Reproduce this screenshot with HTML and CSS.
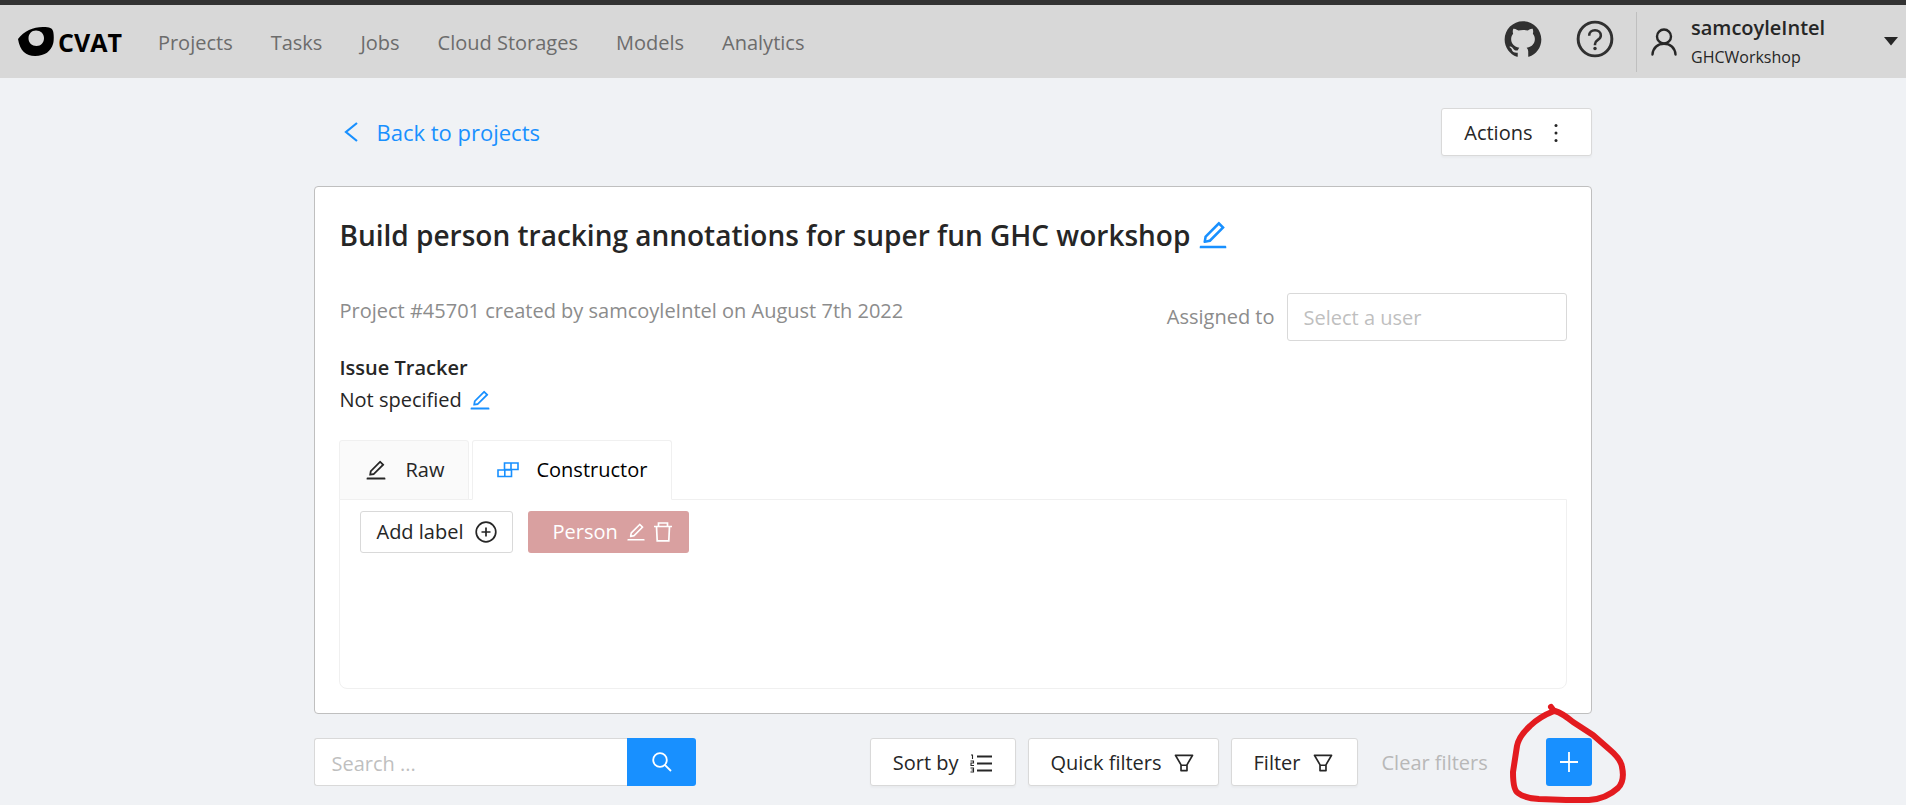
FILE: index.html
```html
<!DOCTYPE html>
<html lang="en">
<head>
<meta charset="utf-8">
<title>CVAT project</title>
<link rel="stylesheet" href="styles.css">
</head>
<body>
<svg class="sprite" aria-hidden="true">
  <symbol id="edit" viewBox="0 0 1024 1024"><path fill="currentColor" d="M257.700 752c2 0 4-.2 6-.5L431.900 722c2-.4 3.900-1.300 5.300-2.800l423.900-423.900a9.960 9.960 0 000-14.100L694.900 114.900c-1.900-1.900-4.400-2.900-7.100-2.900s-5.200 1-7.100 2.900L256.800 538.800c-1.500 1.500-2.400 3.300-2.800 5.300l-29.500 168.200a33.500 33.500 0 009.400 29.800c6.600 6.400 14.900 9.900 23.800 9.900zm67.400-174.400L687.800 215l73.300 73.300-362.700 362.600-88.900 15.700 15.600-89zM880 836H144c-17.700 0-32 14.300-32 32v36c0 4.400 3.600 8 8 8h784c4.400 0 8-3.600 8-8v-36c0-17.700-14.300-32-32-32z"/></symbol>
  <symbol id="filter" viewBox="0 0 1024 1024"><path fill="currentColor" d="M880.100 154H143.900c-24.500 0-39.800 26.700-27.500 48L349 597.400V838c0 17.700 14.200 32 31.800 32h262.400c17.600 0 31.800-14.300 31.800-32V597.400L907.700 202c12.200-21.300-3.100-48-27.600-48zM603.400 798H420.600V642h182.900v156zm9.600-236.600l-9.500 16.600h-183l-9.500-16.600L212.700 226h598.600L613 561.400z"/></symbol>
</svg>
<header class="header">
  <a class="logo" href="#" aria-label="CVAT">
    <svg width="36" height="30" viewBox="0 0 36 30" aria-hidden="true"><path fill-rule="evenodd" d="M0 12C6 4 15 0 25 0C32 0 34 1 35 4C36 7 36 14 35 17C33 24 27 29 17 29C8 29 2 24 0 12ZM18 3.500C13.500 3.500 10.500 7 10.500 11.500S14 19 18.500 19S26 15.500 26 11S22.500 3.500 18 3.500Z"/></svg>
    <span>CVAT</span>
  </a>
  <nav class="nav">
    <a href="#">Projects</a><a href="#">Tasks</a><a href="#">Jobs</a><a href="#">Cloud Storages</a><a href="#">Models</a><a href="#">Analytics</a>
  </nav>
  <div class="tools">
    <button class="plain" aria-label="GitHub"><svg width="42" height="42" viewBox="0 0 1024 1024"><path fill="currentColor" d="M511.600 76.300C264.300 76.200 64 276.400 64 523.500 64 718.900 189.300 885 363.800 946c23.500 5.900 19.900-10.800 19.900-22.200v-77.500c-135.700 15.900-141.200-73.900-150.300-88.900C215 726 171.500 718 184.500 703c30.900-15.900 62.400 4 98.900 57.900 26.400 39.100 77.900 32.500 104 26 5.700-23.500 17.900-44.500 34.700-60.800-140.600-25.200-199.200-111-199.200-213 0-49.500 16.300-95 48.300-131.700-20.400-60.500 1.900-112.300 4.900-120 58.100-5.200 118.500 41.600 123.200 45.300 33-8.900 70.700-13.600 112.900-13.600 42.400 0 80.200 4.900 113.500 13.900 11.300-8.600 67.300-48.800 121.300-43.900 2.900 7.700 24.700 58.300 5.500 118 32.400 36.800 48.900 82.700 48.900 132.300 0 102.200-59 188.100-200 212.900a127.500 127.500 0 0138.100 91v112.500c.8 9 0 17.900 15 17.900 177.100-59.700 304.600-227 304.600-424.100 0-247.200-200.400-447.300-447.500-447.300z"/></svg></button>
    <button class="plain" aria-label="Help"><svg width="42" height="42" viewBox="0 0 1024 1024"><g fill="none" stroke="currentColor" stroke-width="72"><circle cx="512" cy="512" r="411"/><path stroke-width="62" d="M370 430C370 350 430 300 512 300S654 350 654 425C654 540 512 525 512 635V665"/></g><circle cx="512" cy="744" r="42" fill="currentColor"/></svg></button>
  </div>
  <button class="user">
    <svg width="26" height="28" viewBox="0 0 26 28" fill="none" stroke="currentColor" stroke-width="2.400" stroke-linecap="round" aria-hidden="true"><circle cx="13" cy="8.500" r="7"/><path d="M1.500 26.500C2 19.500 7 15.800 13 15.800S24 19.500 24.500 26.500"/></svg>
    <span class="names"><strong>samcoyleIntel</strong><small>GHCWorkshop</small></span>
    <svg width="14" height="9" viewBox="0 0 14 9" aria-hidden="true"><path fill="currentColor" d="M0 0H14L7 8.500Z"/></svg>
  </button>
</header>
<main class="page">
  <div class="topbar">
    <a class="back" href="#"><svg width="14" height="20" viewBox="0 0 14 20" fill="none" stroke="currentColor" stroke-width="2.200" aria-hidden="true"><path d="M13 1L2 10L13 19"/></svg>Back to projects</a>
    <button class="btn actions">Actions<svg width="6" height="20" viewBox="0 0 6 20" fill="currentColor" aria-hidden="true"><circle cx="3" cy="2.500" r="1.500"/><circle cx="3" cy="10" r="1.500"/><circle cx="3" cy="17.500" r="1.500"/></svg></button>
  </div>
  <section class="card">
    <h1 class="title">Build person tracking annotations for super fun GHC workshop<button class="plain link" aria-label="Edit title"><svg width="34" height="34"><use href="#edit"/></svg></button></h1>
    <div class="details">
      <div>
        <p class="meta">Project #45701 created by samcoyleIntel on August 7th 2022</p>
        <h2 class="subtitle">Issue Tracker</h2>
        <p class="tracker">Not specified<button class="plain link" aria-label="Edit issue tracker"><svg width="24" height="24"><use href="#edit"/></svg></button></p>
      </div>
      <div class="assign"><label for="assignee">Assigned to</label><input class="field" id="assignee" type="text" placeholder="Select a user"></div>
    </div>
    <div class="tabs" role="tablist">
      <button class="tab" role="tab" aria-selected="false"><svg width="24" height="24" aria-hidden="true"><use href="#edit"/></svg>Raw</button>
      <button class="tab active" role="tab" aria-selected="true"><svg width="22" height="16" viewBox="0 0 22 16" fill="none" stroke="currentColor" stroke-width="1.600" aria-hidden="true"><path d="M7.500 1H21V7.500H7.500ZM1 8H14.500V14.500H1ZM14 1V8M7.800 7.500V14.500"/></svg>Constructor</button>
    </div>
    <div class="panel" role="tabpanel">
      <button class="add">Add label<svg width="22" height="22" viewBox="0 0 22 22" fill="none" stroke="currentColor" stroke-width="1.700" aria-hidden="true"><circle cx="11" cy="11" r="9.800"/><path d="M11 6.500V15.500M6.500 11H15.500"/></svg></button>
      <div class="label"><span>Person</span>
        <button class="plain" aria-label="Edit label"><svg width="22" height="22"><use href="#edit"/></svg></button>
        <button class="plain" aria-label="Delete label"><svg width="18" height="20" viewBox="0 0 18 20" fill="none" stroke="currentColor" stroke-width="1.700" aria-hidden="true"><path d="M0 4.500H18M4.500 4.500V1H13.500V4.500M2.500 4.500L3.200 18.800H14.800L15.500 4.500"/></svg></button>
      </div>
    </div>
  </section>
  <div class="bottombar">
    <form class="search"><input class="field" type="search" aria-label="Search" placeholder="Search ..."><button class="primary" type="button" aria-label="Search"><svg width="20" height="20" viewBox="0 0 20 20" fill="none" stroke="currentColor" stroke-width="1.800" aria-hidden="true"><circle cx="8" cy="8" r="6.800"/><path d="M12.800 12.800L19 19"/></svg></button></form>
    <div class="filters">
      <button class="btn">Sort by<svg width="24" height="19" viewBox="0 0 24 19" fill="none" stroke="currentColor" aria-hidden="true"><path stroke-width="2" d="M8 2.500H23M8 9.500H23M8 16.500H23"/><path stroke-width="1.100" d="M2 1H3.500V5M1.500 7H4.500V9H2V11.500H5M1.500 14H4.500V18H1.500M2.500 16H4.500"/></svg></button>
      <button class="btn">Quick filters<svg width="24" height="24" aria-hidden="true"><use href="#filter"/></svg></button>
      <button class="btn">Filter<svg width="24" height="24" aria-hidden="true"><use href="#filter"/></svg></button>
      <button class="clear" disabled>Clear filters</button>
    </div>
    <div class="create">
      <button class="primary" aria-label="Create task"><svg width="20" height="20" viewBox="0 0 20 20" stroke="currentColor" stroke-width="1.800" aria-hidden="true"><path d="M10 0V20M1 10H19"/></svg></button>
      <svg class="marker" width="118" height="100" viewBox="0 0 118 100" fill="none" stroke="#e31b1f" stroke-width="6" stroke-linecap="round" stroke-linejoin="round" aria-hidden="true"><path d="M41 4L44 8Q29 14 20 23Q9 33 7 43L3 69Q3 87 8 90Q14 95 29 96L56 97L79 97Q96 96 108 85Q115 78 112 64Q111 56 99 46L83 32L63 19Q52 10 45 8"/></svg>
    </div>
  </div>
</main>
</body>
</html>
```
FILE: styles.css
```css
* { box-sizing: border-box; }
body {
  margin: 0;
  min-height: 100vh;
  background: #f0f2f5;
  color: #262626;
  font: 20px/32px "Open Sans", "Noto Sans", sans-serif;
}
button, input { font: inherit; color: inherit; }
button { cursor: pointer; }
a { text-decoration: none; color: inherit; }
svg { display: block; flex: none; }
h1, h2, p { margin: 0; }
.sprite { display: none; }
.plain { display: flex; border: 0; padding: 0; background: none; }
.link { color: #1890ff; }

.header {
  display: flex;
  align-items: center;
  height: 78px;
  padding-left: 18px;
  border-top: 5px solid #333;
  background: #d8d8d8;
}
.logo { display: flex; align-items: center; gap: 4px; color: #000; }
.logo span { font: bold 25px/30px "Open Sans", "Noto Sans", sans-serif; }
.nav { display: flex; gap: 38px; margin-left: 36px; padding-top: 3px; color: #6c6c6c; }
.tools { display: flex; gap: 30px; margin-left: auto; padding-bottom: 5px; color: #303030; }
.user {
  display: flex;
  align-items: center;
  width: 270px;
  height: 60px;
  margin-left: 20px;
  padding: 0 8px 0 14px;
  border: 0;
  border-left: 1px solid #bfbfbf;
  background: none;
  text-align: left;
}
.names { display: flex; flex-direction: column; margin: 0 auto 0 14px; }
.names strong { font-weight: 600; line-height: 30px; }
.names small { font-size: 16px; line-height: 28px; }

.page { width: 67%; margin: 0 auto; padding: 30px 0 19px; }
.topbar { display: flex; align-items: center; justify-content: space-between; padding-left: 30px; }
.back { display: flex; align-items: center; gap: 18px; color: #1890ff; font-size: 22px; }
.btn {
  display: flex;
  align-items: center;
  gap: 10px;
  height: 48px;
  padding: 2px 22px 0;
  border: 1px solid #d9d9d9;
  border-radius: 3px;
  background: #fff;
  box-shadow: 0 2px 2px rgba(0, 0, 0, 0.03);
}
.actions { gap: 20px; padding-right: 32px; }

.card {
  margin-top: 30px;
  padding: 24px;
  border: 1px solid #bfbfbf;
  border-radius: 4px;
  background: #fff;
}
.title { display: flex; align-items: center; gap: 6px; font-size: 28px; line-height: 48px; font-weight: 600; }
.details { display: flex; justify-content: space-between; align-items: flex-start; margin-top: 34px; }
.meta { padding-top: 2px; color: #8c8c8c; }
.subtitle { margin-top: 25px; font-size: 20px; font-weight: 600; }
.tracker { display: flex; align-items: center; gap: 6px; }
.assign { display: flex; align-items: center; gap: 12px; color: #8c8c8c; }
.field {
  width: 280px;
  height: 48px;
  padding: 0 16px;
  border: 1px solid #d9d9d9;
  border-radius: 3px;
  background: #fff;
  color: #262626;
}
.field::placeholder { color: #bfbfbf; opacity: 1; }

.tabs { display: flex; gap: 3px; margin-top: 24px; }
.tab {
  display: flex;
  align-items: center;
  gap: 17px;
  height: 60px;
  padding: 0 24px;
  border: 1px solid #f0f0f0;
  border-radius: 3px 3px 0 0;
  background: #fafafa;
}
.active { z-index: 1; border-bottom-color: #fff; background: #fff; color: #000; }
.active svg { color: #1890ff; }
.panel {
  display: flex;
  align-items: flex-start;
  gap: 15px;
  min-height: 190px;
  margin-top: -1px;
  padding: 11px 20px;
  border: 1px solid #f0f0f0;
  border-radius: 0 0 8px 8px;
}
.add, .label { display: flex; align-items: center; height: 42px; border-radius: 3px; }
.add { gap: 12px; padding: 0 15px; border: 1px solid #d9d9d9; background: #fff; }
.label { gap: 7px; padding: 0 17px 0 24px; background: #d9a0a0; color: #fff; }

.bottombar { display: flex; align-items: center; margin-top: 24px; }
.search { display: flex; }
.search .field { width: 313px; padding-top: 2px; border-right: 0; border-radius: 3px 0 0 3px; }
.primary {
  display: flex;
  align-items: center;
  justify-content: center;
  width: 46px;
  height: 48px;
  padding: 0;
  border: 0;
  border-radius: 3px;
  background: #1890ff;
  color: #fff;
}
.search .primary { width: 69px; border-radius: 0 3px 3px 0; }
.filters { display: flex; gap: 12px; margin-left: auto; }
.clear { width: 152px; padding: 2px 0 0 12px; border: 0; background: none; color: #b8b8b8; text-align: left; }
.create { position: relative; margin-left: 24px; }
.marker { position: absolute; left: -36px; top: -35px; pointer-events: none; }
```
